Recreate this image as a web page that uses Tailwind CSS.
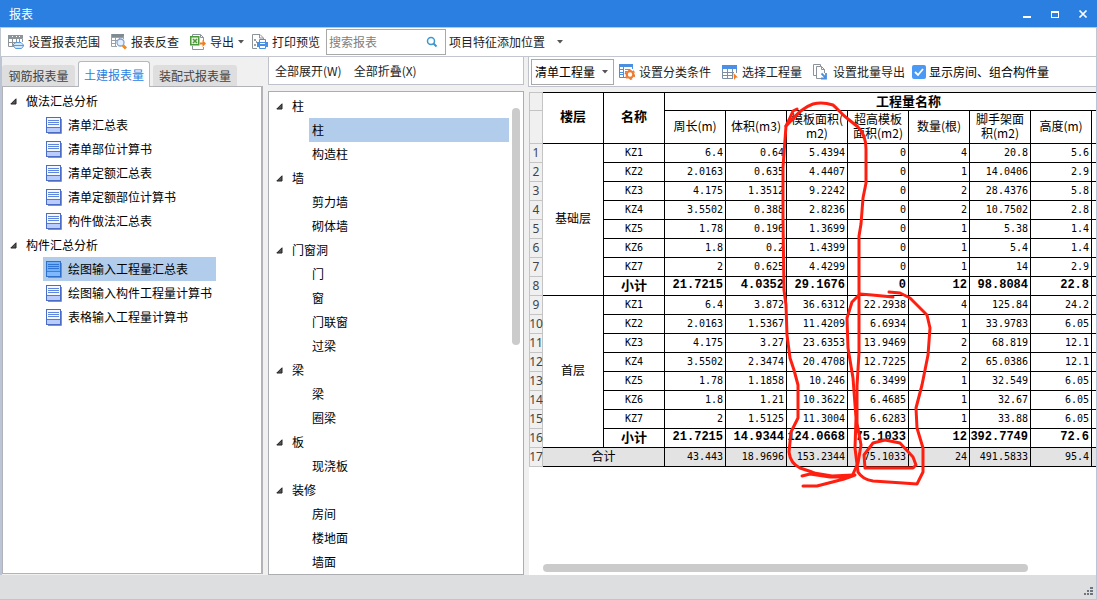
<!DOCTYPE html>
<html lang="zh-CN">
<head>
<meta charset="utf-8">
<title>报表</title>
<script src="https://cdn.jsdelivr.net/npm/@tailwindcss/browser@4"></script>
</head>
<body class="relative flex h-screen flex-col overflow-hidden border-b border-[#bcc5d6] bg-[#f0f0f1] font-['Noto_Sans_CJK_SC',sans-serif] text-[12px] leading-6 text-black">

<svg class="hidden" aria-hidden="true">
  <symbol id="report" viewBox="0 0 16 17">
    <path d="M15.5 2v14.5H2" fill="none" stroke="#8d929c"/>
    <rect x=".5" y=".5" width="14" height="15" fill="#f4f7ff" stroke="#4a6cc4"/>
    <rect x="1" y="11" width="13" height="4" fill="#b8ccff"/>
    <path d="M2 3.500h11M2 5.500h11M2 7.500h11" stroke="#5f86dc"/>
    <path d="M1 10.500h13" stroke="#5878c8"/>
  </symbol>
  <symbol id="report-on" viewBox="0 0 16 17">
    <path d="M15.5 2v14.5H2" fill="none" stroke="#7d8ea8"/>
    <rect x=".5" y=".5" width="14" height="15" fill="#6fb0f7" stroke="#2e6fc9"/>
    <rect x="1" y="11" width="13" height="4" fill="#7fb8ff"/>
    <path d="M2 3.500h11M2 5.500h11M2 7.500h11" stroke="#2f74d4"/>
    <path d="M1 10.500h13" stroke="#3f7fd8"/>
  </symbol>
  <symbol id="tri" viewBox="0 0 7 7"><path d="M6 .8V6H.8z" fill="#555" stroke="#222"/></symbol>
  <symbol id="down" viewBox="0 0 6 4"><path d="M0 0h6L3 3.500z" fill="#555"/></symbol>
</svg>

<header class="flex h-[27px] shrink-0 items-center justify-between bg-[#2b7fe1] pr-[9px] pl-[9px] text-white">
  <h1>报表</h1>
  <div class="flex gap-[18px]">
    <button aria-label="最小化" class="size-[10px]"><svg viewBox="0 0 10 10" class="size-[10px]"><path d="M1 7h8v2H1z" fill="#fff"/></svg></button>
    <button aria-label="最大化" class="size-[10px]"><svg viewBox="0 0 10 10" class="size-[10px]"><path d="M1 2h8v7H1zM2 4v4h6V4z" fill="#fff" fill-rule="evenodd"/></svg></button>
    <button aria-label="关闭" class="size-[10px]"><svg viewBox="0 0 10 10" class="size-[10px]"><path d="M1.500 1.500l7 7M8.500 1.500l-7 7" stroke="#fff" stroke-width="1.700"/></svg></button>
  </div>
</header>

<nav class="flex h-[30px] shrink-0 items-center border-x border-y border-[#c2c6ce] bg-white pl-[7px] whitespace-nowrap text-[#222]">
  <button class="mr-[11px] flex items-center gap-1">
    <svg viewBox="0 0 16 16" class="size-4"><path d="M0 1h15v3H0z" fill="#8d9499"/><path d="M.5 1v11.500H6M.5 4.500h14V8M.5 8.500H8M4.500 4v8M8.500 2v6M11.500 2v6M4.500 1.500v2" fill="none" stroke="#8d9499"/><path d="M4 2.500h1M8 2.500h1M11 2.500h1" stroke="#fff"/><path d="M8 8.500h5l2.500 2.500v1l-2 2.500h-6L5.500 12v-2z" fill="#d5e9fb" stroke="#5a9bdc"/><path d="M6 11.500h9" stroke="#5a9bdc"/></svg>
    设置报表范围</button>
  <button class="mr-[11px] flex items-center gap-1">
    <svg viewBox="0 0 16 16" class="size-4"><path d="M0 0h13v3H0z" fill="#7f8b90"/><path d="M.5 0v12.500H6M.5 6.500H6M.5 9.500H5M4.500 3v10M8.500 3v2M12.500 2v3M0 3.500h13" fill="none" stroke="#9aa2a7"/><circle cx="9.500" cy="8.500" r="3.500" fill="#e6f0fc" stroke="#7ba4dc" stroke-width="1.300"/><path d="M12 11.500l3 3" stroke="#f08a1c" stroke-width="3"/></svg>
    报表反查</button>
  <button class="mr-[8px] flex items-center gap-1">
    <svg viewBox="0 0 16 16" class="size-4"><path d="M2.500 2V.5h8l3 3V7M2.500 12v3.500h11V13M10.500.5v3h3" fill="none" stroke="#8d9499"/><rect x=".75" y="2.750" width="8" height="8" fill="#e9f6e3" stroke="#4c9a3a" stroke-width="1.500"/><path d="M3 5l4 4M7 5L3 9" stroke="#4c9a3a" stroke-width="1.500"/><path d="M10 8.500h2.500V6L16 9.500 12.500 13v-2.500H10z" fill="#f47b20"/></svg>
    导出<svg class="h-1 w-[6px]"><use href="#down"/></svg></button>
  <button class="mr-[6px] flex items-center gap-1">
    <svg viewBox="0 0 16 16" class="size-4"><path d="M5 14.500H.5V.5H8L11.500 4v2M7.500.5V4H11" fill="none" stroke="#8d9499"/><path d="M2 5h2v2H2zM2 10h2v2H2zM4 7h1v2H4z" fill="#9aa2a7"/><path d="M7.500 9V5.500h6V9" fill="#fff" stroke="#4a90e2"/><path d="M5 8h11v5h-2v-1H7v1H5z" fill="#4a90e2"/><path d="M7.500 11.500h6v3h-6z" fill="#fff" stroke="#4a90e2"/><path d="M8 9h5v1H8z" fill="#fff"/></svg>
    打印预览</button>
  <label class="mr-[3px] flex h-[26px] w-[120px] items-center border border-[#a9a9a9] pr-[7px] pl-[2px]">
    <input type="search" aria-label="搜索报表" placeholder="搜索报表" class="min-w-0 flex-1 outline-none placeholder:text-[#808080]">
    <svg viewBox="0 0 12 12" class="size-3"><circle cx="5" cy="5" r="3.500" fill="none" stroke="#3b97cf" stroke-width="1.500"/><path d="M7.500 7.500l3 3" stroke="#3b97cf" stroke-width="2"/></svg>
  </label>
  <button class="flex items-center gap-3">项目特征添加位置<svg class="h-1 w-[6px]"><use href="#down"/></svg></button>
</nav>

<main class="flex min-h-0 flex-1 border-r border-l-2 border-r-[#bcc5d6] border-l-[#bcc5d6]">
  <section class="flex w-[261px] shrink-0 flex-col pt-1">
    <div role="tablist" class="flex h-[25px] items-end gap-[3px] text-[#444]">
      <button role="tab" class="h-[21px] w-[73px] rounded-t-[3px] bg-[#dededf] leading-[21px]">钢筋报表量</button>
      <button role="tab" aria-selected="true" class="relative z-10 -mb-px h-[26px] w-[72px] rounded-t-[3px] border border-b-0 border-[#b4b8c0] bg-white leading-[24px] text-[#2b7fe1]">土建报表量</button>
      <button role="tab" class="h-[21px] w-[84px] rounded-t-[3px] bg-[#dededf] leading-[21px]">装配式报表量</button>
    </div>
    <div class="mb-px min-h-0 flex-1 border border-r-2 border-[#b1b3b8] bg-white pt-[2px]">
      <ul class="w-fit">
        <li><div class="flex items-center gap-[9px] pl-[7px]"><svg class="size-[7px]"><use href="#tri"/></svg>做法汇总分析</div>
          <ul class="ml-10">
            <li class="flex items-center gap-[6px] pr-1 pl-[3px]"><svg class="h-[17px] w-4"><use href="#report"/></svg>清单汇总表</li>
            <li class="flex items-center gap-[6px] pr-1 pl-[3px]"><svg class="h-[17px] w-4"><use href="#report"/></svg>清单部位计算书</li>
            <li class="flex items-center gap-[6px] pr-1 pl-[3px]"><svg class="h-[17px] w-4"><use href="#report"/></svg>清单定额汇总表</li>
            <li class="flex items-center gap-[6px] pr-1 pl-[3px]"><svg class="h-[17px] w-4"><use href="#report"/></svg>清单定额部位计算书</li>
            <li class="flex items-center gap-[6px] pr-1 pl-[3px]"><svg class="h-[17px] w-4"><use href="#report"/></svg>构件做法汇总表</li>
          </ul></li>
        <li><div class="flex items-center gap-[9px] pl-[7px]"><svg class="size-[7px]"><use href="#tri"/></svg>构件汇总分析</div>
          <ul class="ml-10">
            <li class="flex items-center gap-[6px] bg-[#b2ccec] pr-1 pl-[3px]"><svg class="h-[17px] w-4"><use href="#report-on"/></svg>绘图输入工程量汇总表</li>
            <li class="flex items-center gap-[6px] pr-1 pl-[3px]"><svg class="h-[17px] w-4"><use href="#report"/></svg>绘图输入构件工程量计算书</li>
            <li class="flex items-center gap-[6px] pr-1 pl-[3px]"><svg class="h-[17px] w-4"><use href="#report"/></svg>表格输入工程量计算书</li>
          </ul></li>
      </ul>
    </div>
  </section>

  <section class="ml-[5px] flex w-[256px] shrink-0 flex-col">
    <div class="mb-[6px] flex h-7 shrink-0 items-center gap-3 border border-t-0 border-[#bfc2ca] bg-white pl-[6px] text-[#222]">
      <button>全部展开(W)</button><button>全部折叠(X)</button>
    </div>
    <div class="flex min-h-0 flex-1 justify-between border border-[#acadb1] bg-white pt-[2px] pr-[3px]">
      <ul class="w-[240px]">
        <li><div class="flex items-center gap-[9px] pl-[7px]"><svg class="size-[7px]"><use href="#tri"/></svg>柱</div>
          <ul class="ml-10"><li class="bg-[#b2ccec] pl-[3px]">柱</li><li class="pl-[3px]">构造柱</li></ul></li>
        <li><div class="flex items-center gap-[9px] pl-[7px]"><svg class="size-[7px]"><use href="#tri"/></svg>墙</div>
          <ul class="ml-10"><li class="pl-[3px]">剪力墙</li><li class="pl-[3px]">砌体墙</li></ul></li>
        <li><div class="flex items-center gap-[9px] pl-[7px]"><svg class="size-[7px]"><use href="#tri"/></svg>门窗洞</div>
          <ul class="ml-10"><li class="pl-[3px]">门</li><li class="pl-[3px]">窗</li><li class="pl-[3px]">门联窗</li><li class="pl-[3px]">过梁</li></ul></li>
        <li><div class="flex items-center gap-[9px] pl-[7px]"><svg class="size-[7px]"><use href="#tri"/></svg>梁</div>
          <ul class="ml-10"><li class="pl-[3px]">梁</li><li class="pl-[3px]">圈梁</li></ul></li>
        <li><div class="flex items-center gap-[9px] pl-[7px]"><svg class="size-[7px]"><use href="#tri"/></svg>板</div>
          <ul class="ml-10"><li class="pl-[3px]">现浇板</li></ul></li>
        <li><div class="flex items-center gap-[9px] pl-[7px]"><svg class="size-[7px]"><use href="#tri"/></svg>装修</div>
          <ul class="ml-10"><li class="pl-[3px]">房间</li><li class="pl-[3px]">楼地面</li><li class="pl-[3px]">墙面</li></ul></li>
      </ul>
      <div class="mt-[14px] h-[237px] w-2 rounded-full bg-[#cbcbcb]"></div>
    </div>
  </section>

  <section class="ml-[4px] flex min-w-0 flex-1 flex-col">
    <div class="mb-[5px] flex h-[30px] shrink-0 items-center border-b border-l border-[#bfc2ca] bg-white pl-[2px] whitespace-nowrap text-[#222]">
      <div class="mr-[5px] grid h-[26px] w-[83px] items-center border border-[#a9a9a9]">
        <select aria-label="工程量类型" class="col-start-1 row-start-1 w-full appearance-none pl-[3px] text-black outline-none"><option>清单工程量</option></select>
        <svg class="pointer-events-none col-start-1 row-start-1 mr-[5px] h-1 w-[6px] justify-self-end"><use href="#down"/></svg>
      </div>
      <button class="mr-[11px] flex items-center gap-1">
        <svg viewBox="0 0 16 16" class="size-4"><path d="M0 0h14v3H0z" fill="#4a8fe0"/><path d="M.5 2v11.500H7M4.500 3v10M13.500 3v2M1 5.500h3M1 8.500h3M1 10.500h3" fill="none" stroke="#4a8fe0"/><path d="M6 5.500h5M6 7.500h2" stroke="#8d9499"/><circle cx="11" cy="10.500" r="3.300" fill="#fff" stroke="#ee7a30" stroke-width="2.200"/><circle cx="11" cy="10.500" r="4.700" fill="none" stroke="#ee7a30" stroke-width="1.400" stroke-dasharray="2.460 2.460"/></svg>
        设置分类条件</button>
      <button class="mr-[11px] flex items-center gap-1">
        <svg viewBox="0 0 16 16" class="size-4"><path d="M0 1h15v4H0z" fill="#4a90e6"/><path d="M.5 5v9.500H11M0 8.500h12M0 11.500h11M5.500 5v9M10.500 5v9M14.500 5v4" fill="none" stroke="#7d8ea3"/><path d="M11.500 9l4.500 4.500h-2L12 16z" fill="#f47b20"/></svg>
        选择工程量</button>
      <button class="mr-[7px] flex items-center gap-1">
        <svg viewBox="0 0 16 16" class="size-4"><path d="M3 11.500H.5V.5h7V2" fill="none" stroke="#8d9499"/><path d="M8 14.500H3.500v-12h5l3 3V9M8.500 2.500v3h3" fill="none" stroke="#8d9499"/><path d="M8.500 9.500l4 4M13 9v5.500H8" fill="none" stroke="#4a90e2" stroke-width="1.800"/></svg>
        设置批量导出</button>
      <label class="flex items-center gap-[3px] text-black">
        <span class="grid"><input type="checkbox" checked class="col-start-1 row-start-1 size-[14px] appearance-none rounded-[2px] bg-[#4a9af5]"><svg viewBox="0 0 14 14" class="pointer-events-none col-start-1 row-start-1 size-[14px]"><path d="M3 7l3 3 5-6" fill="none" stroke="#fff" stroke-width="1.800"/></svg></span>
        显示房间、组合构件量</label>
    </div>
    <div class="ml-px flex min-h-0 flex-1 flex-col justify-between overflow-hidden bg-white">
      <table class="w-[624px] table-fixed border-separate border-spacing-0 leading-[14px]">
        <colgroup><col class="w-[14px]"><col class="w-[61px]"><col class="w-[61px]"><col span="8" class="w-[61px]"></colgroup>
        <thead>
          <tr class="h-[19px]">
            <td class="border-x border-t border-b border-[#c4c4c4] bg-[#f0f0f0]"></td>
            <th rowspan="2" class="border-y border-r border-black p-0 pb-1 text-[13px]">楼层</th>
            <th rowspan="2" class="border-y border-r border-black p-0 pb-1 text-[13px]">名称</th>
            <th colspan="8" class="border-y border-r border-black p-0 pb-[2px] text-[13px]">工程量名称</th>
          </tr>
          <tr class="h-[33px] whitespace-nowrap">
            <td class="border-x border-b border-[#c4c4c4] bg-[#f0f0f0]"></td>
            <th class="border-r border-b border-black p-0 pb-[2px] font-normal">周长(m)</th>
            <th class="border-r border-b border-black p-0 pb-[2px] font-normal">体积(m3)</th>
            <th class="border-r border-b border-black p-0 pb-[2px] font-normal">模板面积(<br>m2)</th>
            <th class="border-r border-b border-black p-0 pb-[2px] font-normal">超高模板<br>面积(m2)</th>
            <th class="border-r border-b border-black p-0 pb-[2px] font-normal">数量(根)</th>
            <th class="border-r border-b border-black p-0 pb-[2px] font-normal">脚手架面<br>积(m2)</th>
            <th class="border-r border-b border-black p-0 pb-[2px] font-normal">高度(m)</th>
            <th class="border-r border-b border-black p-0 pb-[2px] font-normal">截面面积(<br>m2)</th>
          </tr>
        </thead>
        <tbody id="rows"></tbody>
      </table>
      <div class="mb-[3px] ml-[14px] h-2 w-[485px] shrink-0 rounded-full bg-[#cbcbcb]"></div>
    </div>
  </section>
</main>

<footer class="flex h-6 shrink-0 items-end justify-end border-r border-[#bcc5d6] bg-[#dddee0] pr-[3px] pb-[3px]">
  <svg viewBox="0 0 9 9" class="size-[9px]"><path d="M6 0h3v2H6zM3 3h2v2H3zM6 3h3v2H6zM0 6h2v2H0zM3 6h2v2H3zM6 6h3v2H6z" fill="#6f757e"/></svg>
</footer>

<svg viewBox="0 0 1097 600" class="pointer-events-none absolute top-0 left-0 h-[600px] w-[1097px]" fill="none" stroke="#ff1f10" stroke-width="3" stroke-linecap="round" stroke-linejoin="round" aria-hidden="true">
  <path d="M797 109l-4 2-4 9-3 6c8-8 15-18 27-22 7-2 14-1 20 1 5 4 8 9 15 14l10 8c5 5 8 13 8 22v34l-3 15-2 26-2 12v117l-2 33v37l4 22-3 18-5 11"/>
  <path d="M786 126l-3 41v53l1 70 2 15 1 30 3 23 4 12 4 15v33l-7 14-2 20c1 9 5 13 11 16l12 4 2 1"/>
  <path d="M802 476l8-2 20 3h14l11-2-11 4-27 7h-14M814 473l18 3 21-1"/>
  <path d="M889 292l11 1 10 5 17 17 3 13-2 27-6 30-6 23 1 20 6 20v24l-6 12-14-1-30-2c-7-1-12-4-15-9l-3-24 1-30-3-40-5-30-1-30 5-16 8-8 12 1 21 2"/>
  <path d="M865 468l-1-13 9-12 12-3 15 3 13 14 3 8-3 3h-48"/>
</svg>

<script>
const floors = [
  ['基础层', [
    ['KZ1', '6.4', '0.64', '5.4394', '0', '4', '20.8', '5.6'],
    ['KZ2', '2.0163', '0.635', '4.4407', '0', '1', '14.0406', '2.9'],
    ['KZ3', '4.175', '1.3512', '9.2242', '0', '2', '28.4376', '5.8'],
    ['KZ4', '3.5502', '0.388', '2.8236', '0', '2', '10.7502', '2.8'],
    ['KZ5', '1.78', '0.196', '1.3699', '0', '1', '5.38', '1.4'],
    ['KZ6', '1.8', '0.2', '1.4399', '0', '1', '5.4', '1.4'],
    ['KZ7', '2', '0.625', '4.4299', '0', '1', '14', '2.9'],
    ['小计', '21.7215', '4.0352', '29.1676', '0', '12', '98.8084', '22.8']]],
  ['首层', [
    ['KZ1', '6.4', '3.872', '36.6312', '22.2938', '4', '125.84', '24.2'],
    ['KZ2', '2.0163', '1.5367', '11.4209', '6.6934', '1', '33.9783', '6.05'],
    ['KZ3', '4.175', '3.27', '23.6353', '13.9469', '2', '68.819', '12.1'],
    ['KZ4', '3.5502', '2.3474', '20.4708', '12.7225', '2', '65.0386', '12.1'],
    ['KZ5', '1.78', '1.1858', '10.246', '6.3499', '1', '32.549', '6.05'],
    ['KZ6', '1.8', '1.21', '10.3622', '6.4685', '1', '32.67', '6.05'],
    ['KZ7', '2', '1.5125', '11.3004', '6.6283', '1', '33.88', '6.05'],
    ['小计', '21.7215', '14.9344', '124.0668', '75.1033', '12', '392.7749', '72.6']]]
];
const total = ['43.443', '18.9696', '153.2344', '75.1033', '24', '491.5833', '95.4'];
let n = 0, html = '';
const num = () => `<th class="border-x border-b border-[#c4c4c4] bg-[#f0f0f0] p-0 font-['Noto_Sans',sans-serif] font-normal text-[#444]"><div class="flex justify-center">${++n}</div></th>`;
const plain = v => `<td class="border-r border-b border-black p-0 pr-[2px] text-right font-['DejaVu_Sans_Mono',monospace] text-[10px]">${v}</td>`;
const bold = v => `<td class="border-r border-b border-black p-0 pr-[2px] pb-[2px] text-right font-['Liberation_Mono',monospace] font-bold">${v}</td>`;
for (const [floor, rows] of floors) rows.forEach(([name, ...vals], i) => {
  const sum = name === '小计';
  html += '<tr class="h-[19px]">' + num()
    + (i ? '' : `<td rowspan="8" class="border-r border-b border-black p-0 pb-1 text-center">${floor}</td>`)
    + (sum ? `<td class="border-r border-b border-black p-0 pb-[2px] text-center text-[13px] font-bold">${name}</td>`
           : `<td class="border-r border-b border-black p-0 text-center font-['DejaVu_Sans_Mono',monospace] text-[10px]">${name}</td>`)
    + [...vals, ''].map(sum ? bold : plain).join('') + '</tr>';
});
html += '<tr class="h-[19px] bg-[#e3e3e3]">' + num()
  + '<td colspan="2" class="border-r border-b border-black p-0 pb-[2px] text-center">合计</td>'
  + [...total, ''].map(plain).join('') + '</tr>';
document.getElementById('rows').innerHTML = html;
</script>
</body>
</html>
